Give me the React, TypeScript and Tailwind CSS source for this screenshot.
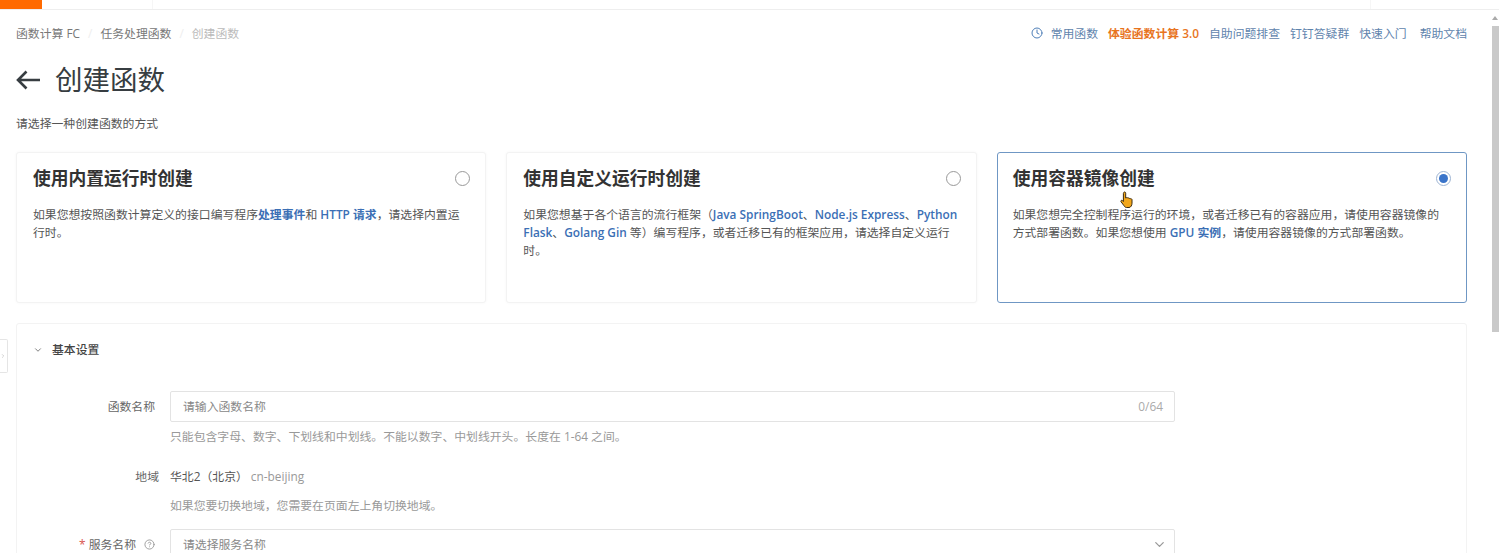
import { ChevronDown, ChevronRight, CircleHelp, Clock } from 'lucide-react'
import type { ReactNode } from 'react'

const cjk = "font-['Open_Sans','Noto_Sans_CJK_SC',sans-serif]"

function A({ children }: { children: ReactNode }) {
  return <span className="font-semibold text-[#3b6fb5]">{children}</span>
}

function MethodCard({
  title,
  selected,
  children,
}: {
  title: string
  selected?: boolean
  children: ReactNode
}) {
  return (
    <div
      className={`h-[151px] rounded-[3px] border bg-white pr-4 pt-[10px] ${
        selected ? 'border-[#6f97c4] pl-[15px]' : 'border-[#f3f3f3] pl-4 shadow-[0_0_3px_rgba(0,0,0,0.04)]'
      }`}
    >
      <div className="flex h-[30px] items-center justify-between">
        <h3 className="text-[17.75px] font-bold text-[#333]">{title}</h3>
        {selected ? (
          <span className="-mr-[1px] flex h-[15px] w-[15px] items-center justify-center rounded-full border border-[#9db4d3]">
            <span className="h-[9px] w-[9px] rounded-full bg-[#3a74c9]" />
          </span>
        ) : (
          <span className="-mr-[1px] h-[15px] w-[15px] rounded-full border border-[#999]" />
        )}
      </div>
      <p className="mt-[12px] text-[11.85px] leading-[18px] text-[#555]">{children}</p>
    </div>
  )
}

function Field({
  label,
  wide,
  children,
}: {
  label: ReactNode
  wide?: boolean
  children: ReactNode
}) {
  return (
    <div className="flex">
      <div
        className={`flex h-[31px] shrink-0 items-center justify-end text-[11.85px] text-[#666] ${
          wide ? 'w-[142px]' : 'w-[138px]'
        }`}
      >
        {label}
      </div>
      <div className={`w-[1005px] ${wide ? 'ml-[11px]' : 'ml-[15px]'}`}>{children}</div>
    </div>
  )
}

function Help({ tight, children }: { tight?: boolean; children: ReactNode }) {
  return (
    <div className={`text-[11.85px] leading-[18px] text-[#999] ${tight ? 'mt-[4px]' : 'mt-[5px]'}`}>{children}</div>
  )
}

export default function App() {
  return (
    <div className={`relative h-[553px] overflow-hidden bg-white ${cjk}`}>
      <div className="flex h-[10px] border-b border-[#eee]">
        <div className="h-[9px] w-[42px] bg-[#ff6a00]" />
        <div className="ml-[110px] h-[9px] w-px bg-[#f6f6f6]" />
        <div className="ml-auto mr-[128px] h-[9px] w-px bg-[#f6f6f6]" />
      </div>

      <main className="w-[1467px] pl-4">
        <div className="flex h-[47px] items-center justify-between text-[11.85px]">
          <div className="flex items-center text-[#777]">
            <span>函数计算 FC</span>
            <span className="mx-[8px] text-[#eee]">/</span>
            <span>任务处理函数</span>
            <span className="mx-[8px] text-[#eee]">/</span>
            <span className="text-[#bbb]">创建函数</span>
          </div>
          <div className="flex items-center text-[#5f84ad]">
            <Clock size={12} className="mr-[8px] text-[#4f7fb8]" />
            <span>常用函数</span>
            <span className="ml-[10px] font-semibold text-[#e8741e]">体验函数计算 3.0</span>
            <span className="ml-[10px]">自助问题排查</span>
            <span className="ml-[10px]">钉钉答疑群</span>
            <span className="ml-[10px]">快速入门</span>
            <span className="ml-[13px]">帮助文档</span>
          </div>
        </div>

        <div className="flex h-[46px] items-center text-[#373d41]">
          <svg width="24" height="20" viewBox="0 0 24 20" fill="none" stroke="currentColor" strokeWidth="2.6" className="mr-[15px]">
            <path d="M24 10H2M10.500 1.500 2 10l8.500 8.500" />
          </svg>
          <h1 className="text-[27.5px] font-normal leading-none">创建函数</h1>
        </div>

        <p className="mt-[11px] text-[11.85px] leading-[18px] text-[#555]">请选择一种创建函数的方式</p>

        <div className="mt-[20px] grid grid-cols-3 gap-5">
          <MethodCard title="使用内置运行时创建">
            如果您想按照函数计算定义的接口编写程序<A>处理事件</A>和 <A>HTTP 请求</A>，请选择内置运行时。
          </MethodCard>
          <MethodCard title="使用自定义运行时创建">
            如果您想基于各个语言的流行框架（<A>Java SpringBoot</A>、<A>Node.js Express</A>、<A>Python Flask</A>、
            <A>Golang Gin</A> 等）编写程序，或者迁移已有的框架应用，请选择自定义运行时。
          </MethodCard>
          <MethodCard title="使用容器镜像创建" selected>
            如果您想完全控制程序运行的环境，或者迁移已有的容器应用，请使用容器镜像的方式部署函数。如果您想使用 <A>GPU 实例</A>，请使用容器镜像的方式部署函数。
          </MethodCard>
        </div>

        <section className="mt-[20px] h-[300px] rounded-[3px] border border-[#f3f3f3] bg-white">
          <div className="flex h-[51px] items-center pl-[16px] text-[11.85px] text-[#444]">
            <ChevronDown size={10} className="text-[#666]" />
            <span className="ml-[9px] font-medium">基本设置</span>
          </div>

          <div className="mt-[16px]">
            <Field label="函数名称">
              <div className="flex h-[31px] items-center justify-between rounded-[2px] border border-[#e3e3e3] pl-3 pr-[11px] text-[11.85px]">
                <span className="text-[#888]">请输入函数名称</span>
                <span className="text-[#aaa]">0/64</span>
              </div>
              <Help>只能包含字母、数字、下划线和中划线。不能以数字、中划线开头。长度在 1-64 之间。</Help>
            </Field>
          </div>

          <div className="mt-[16px]">
            <Field label="地域" wide>
              <div className="flex h-[31px] items-center text-[11.85px]">
                <span className="text-[#555]">华北2（北京）</span>
                <span className="ml-[3px] text-[#999]">cn-beijing</span>
              </div>
              <Help tight>如果您要切换地域，您需要在页面左上角切换地域。</Help>
            </Field>
          </div>

          <div className="mt-[15px]">
            <Field
              label={
                <>
                  <span className="mr-[3px] text-[#d9534f]">*</span>
                  服务名称
                  <CircleHelp size={11} className="ml-[8px] text-[#999]" />
                </>
              }
            >
              <div className="flex h-[31px] items-center justify-between rounded-[2px] border border-[#e3e3e3] pl-3 pr-[7px] text-[11.85px]">
                <span className="text-[#888]">请选择服务名称</span>
                <ChevronDown size={15} className="text-[#999]" />
              </div>
            </Field>
          </div>
        </section>
      </main>

      {/* side tab collapsed nav */}
      <div className="absolute left-0 top-[339px] flex h-[34px] w-[8px] items-center justify-start rounded-r-[2px] border border-l-0 border-[#e5e5e5] bg-white">
        <ChevronRight size={6} className="text-[#aaa]" />
      </div>

      {/* scrollbar */}
      <div className="absolute right-[1px] top-[16px] h-0 w-0 border-x-[3px] border-b-[4px] border-x-transparent border-b-[#aaa]" />
      <div className="absolute right-0 top-[26px] h-[306px] w-[7px] bg-[#c9c9c9]" />

      {/* mouse cursor */}
      <svg className="absolute left-[1120px] top-[191px]" width="14" height="18" viewBox="0 0 14 18">
        <path
          d="M4 1.2c.8-.6 1.7 0 1.7 1V7l1-.4c.6-.2 1 .2 1.2.5.5-.3 1.1-.2 1.4.3.5-.3 1.1-.1 1.4.4.6-.2 1.3.2 1.3 1v3.4c0 2-1.2 4.3-3 4.3H6.5c-1.2 0-1.9-.8-2.6-1.9L1 10.700c-.5-.8.4-1.900 1.400-1.200l1 1V2.400c0-.5.2-.9.600-1.200z"
          fill="#f2a71b"
          stroke="#3b2a10"
          strokeWidth="1"
        />
      </svg>
    </div>
  )
}
